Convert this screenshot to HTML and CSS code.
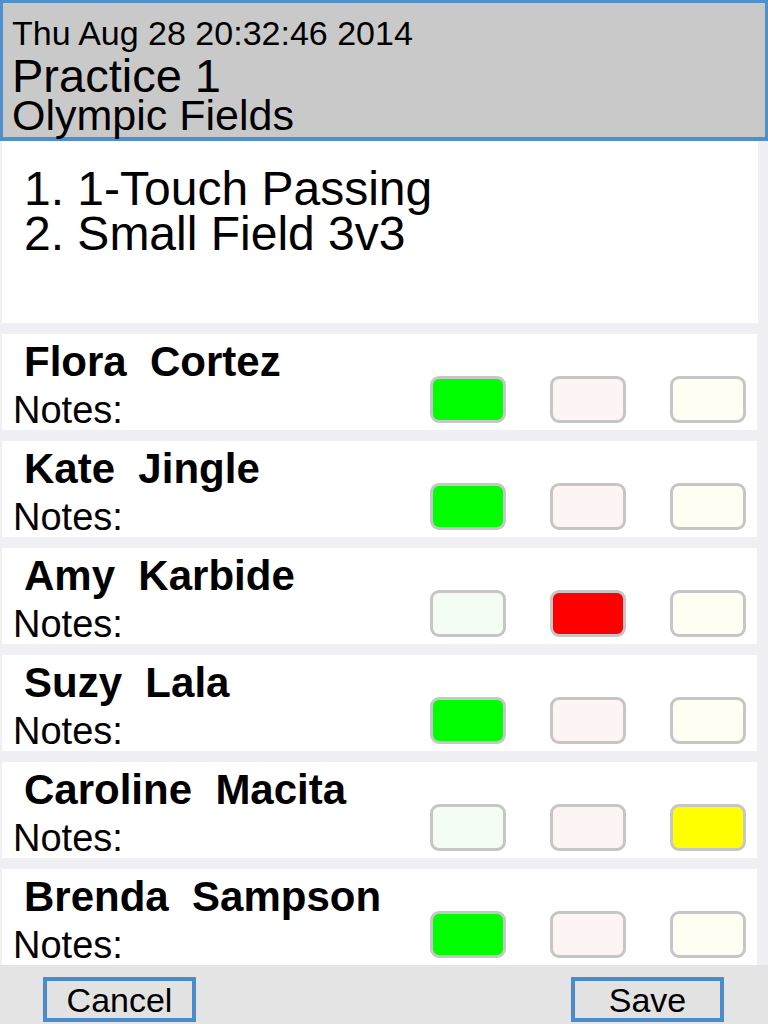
FILE: index.html
```html
<!DOCTYPE html>
<html lang="en">
  <head>
    <meta charset="UTF-8" />
    <meta name="viewport" content="width=device-width, initial-scale=1.0" />
    <title>Practice Attendance</title>
    <link rel="stylesheet" href="styles.css">
  </head>
  <body>
    <div class="header">
      <div class="date">Thu Aug 28 20:32:46 2014</div>
      <div class="title">Practice 1</div>
      <div class="place">Olympic Fields</div>
    </div>

    <div class="drills">
      <p>1. 1-Touch Passing</p>
      <p>2. Small Field 3v3</p>
    </div>

    <div class="players">
      <div class="player">
        <div class="info">
          <div class="name">Flora&nbsp; Cortez</div>
          <div class="notes">Notes:</div>
        </div>
        <div class="marks">
          <span class="mark good on"></span>
          <span class="mark bad"></span>
          <span class="mark meh"></span>
        </div>
      </div>

      <div class="player">
        <div class="info">
          <div class="name">Kate&nbsp; Jingle</div>
          <div class="notes">Notes:</div>
        </div>
        <div class="marks">
          <span class="mark good on"></span>
          <span class="mark bad"></span>
          <span class="mark meh"></span>
        </div>
      </div>

      <div class="player">
        <div class="info">
          <div class="name">Amy&nbsp; Karbide</div>
          <div class="notes">Notes:</div>
        </div>
        <div class="marks">
          <span class="mark good"></span>
          <span class="mark bad on"></span>
          <span class="mark meh"></span>
        </div>
      </div>

      <div class="player">
        <div class="info">
          <div class="name">Suzy&nbsp; Lala</div>
          <div class="notes">Notes:</div>
        </div>
        <div class="marks">
          <span class="mark good on"></span>
          <span class="mark bad"></span>
          <span class="mark meh"></span>
        </div>
      </div>

      <div class="player">
        <div class="info">
          <div class="name">Caroline&nbsp; Macita</div>
          <div class="notes">Notes:</div>
        </div>
        <div class="marks">
          <span class="mark good"></span>
          <span class="mark bad"></span>
          <span class="mark meh on"></span>
        </div>
      </div>

      <div class="player">
        <div class="info">
          <div class="name">Brenda&nbsp; Sampson</div>
          <div class="notes">Notes:</div>
        </div>
        <div class="marks">
          <span class="mark good on"></span>
          <span class="mark bad"></span>
          <span class="mark meh"></span>
        </div>
      </div>
    </div>

    <div class="footer">
      <button type="button" class="cancel">Cancel</button>
      <button type="button" class="save">Save</button>
    </div>
  </body>
</html>
```

FILE: styles.css
```css
body {
  font-family: "Liberation Sans", Arial, sans-serif;
  background-color: #efeff4;
  color: #000;
  margin: 0;
  padding: 0;
  width: 768px;
  height: 1024px;
  overflow: hidden;
}

.header {
  box-sizing: border-box;
  width: 768px;
  background-color: #c9c9c9;
  border: 3px solid #4f8fcc;
  border-bottom-width: 4px;
  padding: 10px 0 5px 9px;
}

.date {
  font-size: 34px;
  line-height: 40px;
}

.title {
  font-size: 47px;
  line-height: 46px;
}

.place {
  font-size: 43px;
  line-height: 33px;
}

.drills {
  box-sizing: border-box;
  height: 182px;
  margin: 0 10px 11px 2px;
  background-color: #fff;
  padding: 25px 0 0 22px;
}

.drills p {
  margin: 0;
  font-size: 48px;
  line-height: 45px;
}

.players {
  display: flex;
  flex-direction: column;
  gap: 11px;
  margin: 0 11px 0 2px;
}

.player {
  display: flex;
  justify-content: space-between;
  height: 96px;
  background-color: #fff;
  padding-right: 11px;
}

.info {
  padding-top: 6px;
}

.name {
  font-size: 42px;
  font-weight: bold;
  line-height: 44px;
  padding-left: 22px;
  white-space: nowrap;
}

.notes {
  font-size: 38px;
  line-height: 40px;
  margin-top: 6px;
  padding-left: 11px;
}

.marks {
  display: flex;
  gap: 44px;
  padding-top: 42px;
}

.mark {
  box-sizing: border-box;
  width: 76px;
  height: 47px;
  border: 3px solid #c6c6c6;
  border-radius: 9px;
}

.mark.good {
  background-color: #f3fdf3;
}

.mark.bad {
  background-color: #fdf5f4;
}

.mark.meh {
  background-color: #fefef3;
}

.mark.good.on {
  background-color: #00ff00;
}

.mark.bad.on {
  background-color: #ff0000;
}

.mark.meh.on {
  background-color: #ffff00;
}

.footer {
  display: flex;
  justify-content: space-between;
  height: 59px;
  box-sizing: border-box;
  background-color: #e4e4e4;
  padding: 12px 44px 0 43px;
}

.footer button {
  box-sizing: border-box;
  width: 153px;
  height: 45px;
  margin: 0;
  padding: 2px 0 0;
  background-color: #e2e2e2;
  border: 4px solid #4a8ccb;
  border-radius: 0;
  font-family: "Liberation Sans", Arial, sans-serif;
  font-size: 34px;
  line-height: 35px;
  color: #000;
  cursor: pointer;
}
```
